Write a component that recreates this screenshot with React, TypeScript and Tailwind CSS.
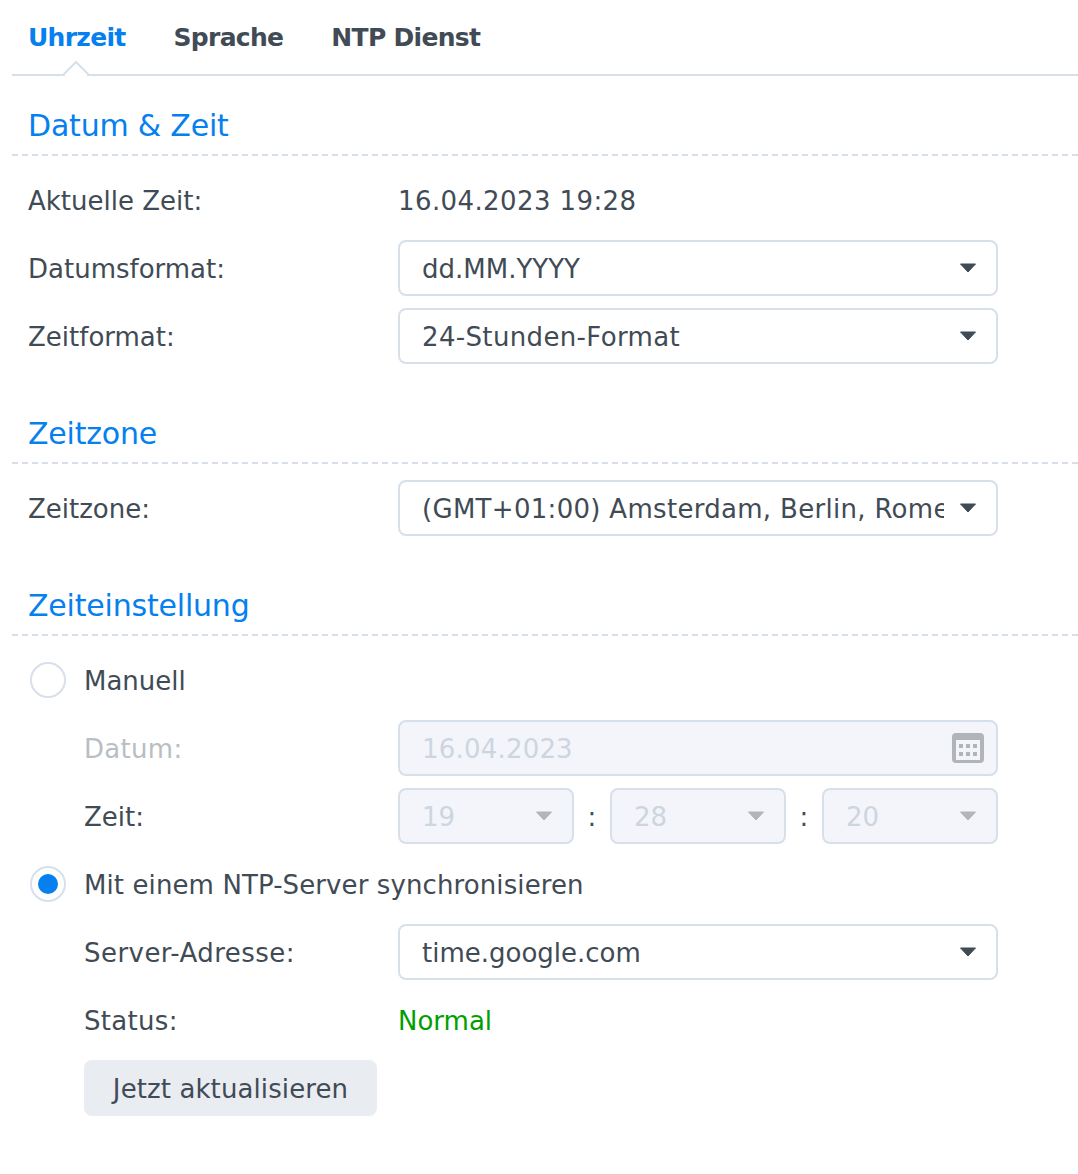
import { FC, ReactNode } from "react";

const Caret: FC<{ disabled?: boolean }> = ({ disabled }) => (
  <svg width="18" height="10" viewBox="0 0 18 10" className="shrink-0">
    <path
      d="M1.5 1 H16.5 L9 9 Z"
      fill={disabled ? "#b1b5ba" : "#414b55"}
      stroke={disabled ? "#b1b5ba" : "#414b55"}
      strokeWidth="1"
      strokeLinejoin="round"
    />
  </svg>
);

const Select: FC<{ value: string; disabled?: boolean; className?: string; textClassName?: string }> = ({
  value,
  disabled,
  className = "w-[600px]",
  textClassName = "",
}) => (
  <div
    className={`${className} h-14 flex items-center pl-[22px] pr-[19px] gap-[15px] border-2 border-[#d7e0ea] rounded-lg ${
      disabled ? "bg-[#f3f5fa] text-[#ccd5e0]" : "bg-white text-[#414b55]"
    }`}
  >
    <div className={`flex-1 pt-[2px] overflow-hidden whitespace-nowrap ${textClassName}`}>{value}</div>
    <Caret disabled={disabled} />
  </div>
);

const Section: FC<{ title: string; children: ReactNode }> = ({ title, children }) => (
  <div>
    <div className="h-20 pl-4 pt-[22px] flex items-center border-b-2 border-dashed border-[#d7e0ea] text-[30px] tracking-[-0.2px] text-[#0580ee]">
      {title}
    </div>
    {children}
  </div>
);

const Row: FC<{
  label: string;
  muted?: boolean;
  indent?: boolean;
  className?: string;
  labelClassName?: string;
  children: ReactNode;
}> = ({ label, muted, indent, className = "", labelClassName = "", children }) => (
  <div className={`flex items-center ${className}`}>
    <div
      className={`pt-[2px] ${indent ? "w-[314px] ml-[72px]" : "w-[370px] ml-4"} ${
        muted ? "text-[#b9bec4]" : ""
      } ${labelClassName}`}
    >
      {label}
    </div>
    {children}
  </div>
);

const Radio: FC<{ checked?: boolean }> = ({ checked }) => (
  <div className="w-9 h-9 ml-[18px] mr-[18px] rounded-full border-2 border-[#d7e0ea] bg-white flex items-center justify-center">
    {checked && <div className="w-5 h-5 rounded-full bg-[#0580ee]" />}
  </div>
);

const CalendarIcon: FC = () => (
  <svg width="32" height="30" viewBox="0 0 32 30" className="shrink-0">
    <rect width="32" height="30" rx="4" fill="#b1b5ba" />
    <rect x="4" y="7" width="24" height="20" fill="#f3f5fa" />
    {[7, 14, 21].map((x) =>
      [11, 19].map((y) => <rect key={`${x}-${y}`} x={x} y={y} width="4" height="4" fill="#b1b5ba" />)
    )}
  </svg>
);

const App: FC = () => {
  return (
    <div className="w-[1078px] h-[1174px] bg-white pl-3 text-[26px] leading-8 text-[#414b55] font-['DejaVu_Sans',sans-serif]">
      <div className="relative h-[76px] border-b-2 border-[#d7e0ea] pl-4 pt-[22px] flex gap-12 text-[25px] font-bold tracking-[-0.7px]">
        <div className="text-[#0580ee]">Uhrzeit</div>
        <div>Sprache</div>
        <div>NTP Dienst</div>
        <svg width="28" height="16" viewBox="0 0 28 16" className="absolute left-[50px] top-[60px]">
          <path d="M1 15 L14 2 L27 15" fill="#fff" stroke="#d7e0ea" strokeWidth="2" />
          <rect x="3" y="14" width="22" height="2" fill="#fff" />
        </svg>
      </div>

      <Section title="Datum & Zeit">
        <div className="flex flex-col gap-3">
          <Row label="Aktuelle Zeit:" className="h-[84px] -mb-3 pt-1">
            <div className="pt-[2px] tracking-[0.4px]">16.04.2023 19:28</div>
          </Row>
          <Row label="Datumsformat:">
            <Select value="dd.MM.YYYY" />
          </Row>
          <Row label="Zeitformat:">
            <Select value="24-Stunden-Format" textClassName="tracking-[0.35px]" />
          </Row>
        </div>
      </Section>

      <div className="mt-5">
        <Section title="Zeitzone">
          <Row label="Zeitzone:" className="mt-4">
            <Select
              value="(GMT+01:00) Amsterdam, Berlin, Rome, Stockholm, Wien"
              textClassName="tracking-[0.3px]"
            />
          </Row>
        </Section>
      </div>

      <div className="mt-5">
        <Section title="Zeiteinstellung">
          <div className="flex items-center h-[36px] mt-[26px]">
            <Radio />
            <div className="pt-[2px]">Manuell</div>
          </div>
          <div className="flex flex-col gap-3 mt-[22px]">
            <Row label="Datum:" muted indent labelClassName="tracking-[0.3px]">
              <div className="w-[600px] h-14 flex items-center justify-between pl-[22px] pr-[12px] border-2 border-[#d7e0ea] rounded-lg bg-[#f3f5fa] text-[#ccd5e0]">
                <div className="pt-[2px] tracking-[0.2px]">16.04.2023</div>
                <CalendarIcon />
              </div>
            </Row>
            <Row label="Zeit:" indent>
              <div className="w-[600px] flex items-center justify-between">
                <Select value="19" disabled className="w-[176px]" />
                <div className="pt-[2px]">:</div>
                <Select value="28" disabled className="w-[176px]" />
                <div className="pt-[2px]">:</div>
                <Select value="20" disabled className="w-[176px]" />
              </div>
            </Row>
          </div>
          <div className="flex items-center h-[36px] mt-[22px]">
            <Radio checked />
            <div className="pt-[2px] tracking-[0.1px]">Mit einem NTP-Server synchronisieren</div>
          </div>
          <Row label="Server-Adresse:" indent className="mt-[22px]" labelClassName="tracking-[0.45px]">
            <Select value="time.google.com" />
          </Row>
          <Row label="Status:" indent className="h-8 mt-6" labelClassName="tracking-[0.3px]">
            <div className="pt-[2px] text-[#00a000]">Normal</div>
          </Row>
          <button className="block mt-6 ml-[72px] pt-[2px] w-[293px] h-14 rounded-lg bg-[#e9edf2] text-[#414b55] tracking-[0.1px]">
            Jetzt aktualisieren
          </button>
        </Section>
      </div>
    </div>
  );
};

export default App;
